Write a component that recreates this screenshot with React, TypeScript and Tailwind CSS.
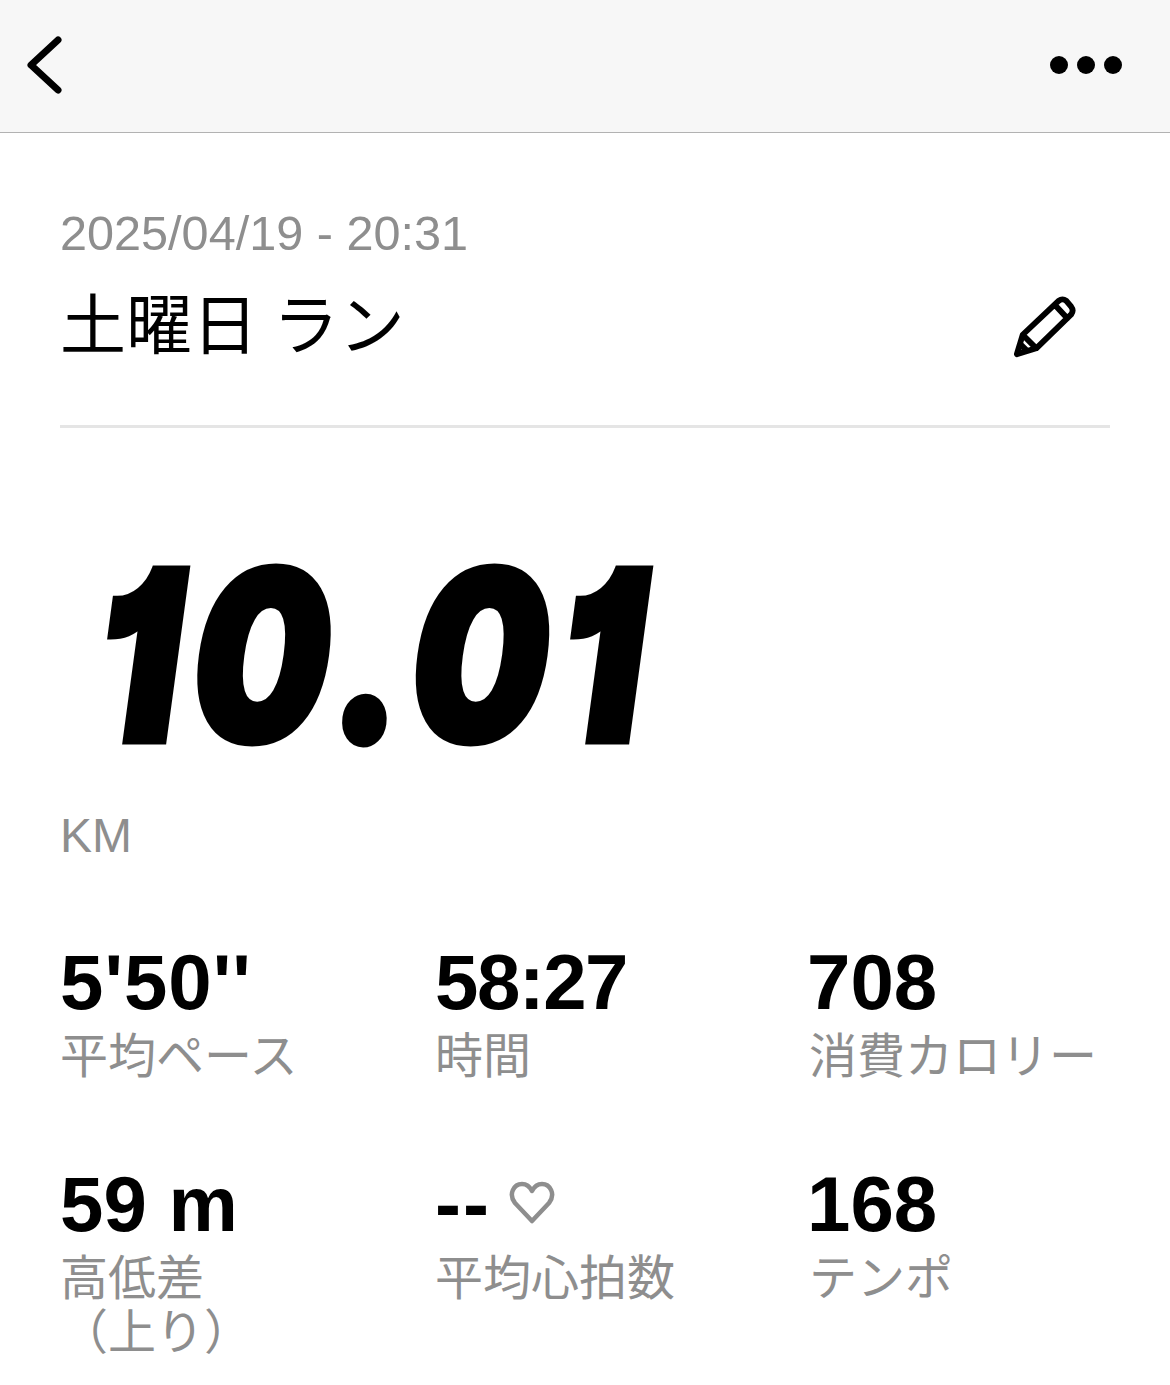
import React from 'react';

const sans = 'font-["Liberation_Sans","Noto_Sans_CJK_JP",sans-serif]';

const stats = [
  { value: "5'50''", label: '平均ペース', valueClass: 'tracking-[1px]' },
  { value: '58:27', label: '時間', valueClass: 'tracking-[-1.5px]' },
  { value: '708', label: '消費カロリー', valueClass: '-ml-[2px]' },
  { value: '59 m', label: '高低差\n（上り）', valueClass: '' },
  { value: '--', label: '平均心拍数', heart: true, valueClass: 'tracking-[2px]' },
  { value: '168', label: 'テンポ', valueClass: '-ml-[2px]' },
];

const App = () => {
  return (
    <div className={`${sans} w-[1170px] h-[1385px] bg-white overflow-hidden`}>
      {/* Top bar */}
      <header className="h-[133px] bg-[#f7f7f7] border-b border-[#b2b2b2] flex items-center justify-between pl-[26px] pr-[48px] pb-[2px]">
        <svg width="38" height="60" viewBox="0 0 38 60" fill="none">
          <path d="M32 4 L5 29 L32 54" stroke="#000" strokeWidth="7" strokeLinecap="round" strokeLinejoin="round" transform="translate(0 1)" />
        </svg>
        <div className="flex gap-[9px]">
          <span className="w-[18px] h-[18px] rounded-full bg-black" />
          <span className="w-[18px] h-[18px] rounded-full bg-black" />
          <span className="w-[18px] h-[18px] rounded-full bg-black" />
        </div>
      </header>

      <main className="px-[60px]">
        <p className="mt-[72px] text-[48.6px] leading-[56px] text-[#8e8e8e]">2025/04/19 - 20:31</p>
        <div className="mt-[23px] flex items-center justify-between h-[72px]">
          <h1 className="text-[66px] leading-[72px] text-black whitespace-pre font-['Noto_Sans_CJK_JP',sans-serif]">土曜日 ラン</h1>
          <svg className="mr-[33px] mt-[14px]" width="64" height="66" viewBox="0 0 66 66" fill="none">
            <path
              d="M4 61 L10 41 L47 6 Q51 3 55 6 L60 12 Q63 16 60 20 L24 55 Z M43 10 L56 24 M11 42 L23 54 M8 51 L14 57"
              stroke="#000"
              strokeWidth="6"
              strokeLinejoin="round"
              strokeLinecap="round"
            />
          </svg>
        </div>
        <div className="mt-[69px] h-[3px] bg-[#e5e5e5]" />

        {/* Distance */}
        <div className="mt-[111px] h-[230px] pl-[36px] overflow-visible">
          <div className="origin-top-left scale-x-[0.82] text-[236px] leading-[236px] italic font-black text-black tracking-[13px] font-['Inter',sans-serif] [font-feature-settings:'cv01'] [-webkit-text-stroke:7px_black] -mt-[2px] whitespace-nowrap">
            10.01
          </div>
        </div>
        <p className="mt-[41px] text-[48px] leading-[56px] text-[#8e8e8e]">KM</p>

        {/* Stats */}
        <div className="mt-[76px] grid grid-cols-[375px_374px_1fr] gap-y-[42px]">
          {stats.map((s) => (
            <div key={s.label} className="min-h-[180px]">
              <div className={`flex items-center h-[85px] text-[78px] leading-[85px] font-bold text-black ${s.valueClass}`}>
                {s.value}
                {s.heart && (
                  <svg className="ml-[18px] -mt-[4px]" width="46" height="44" viewBox="0 0 46 44" fill="none">
                    <path
                      d="M23 40 L6 22 C-1 13 5 3 13 3 C18 3 21 6 23 10 C25 6 28 3 33 3 C41 3 47 13 40 22 Z"
                      stroke="#8e8e8e"
                      strokeWidth="4.5"
                      strokeLinejoin="round"
                    />
                  </svg>
                )}
              </div>
              <p className="text-[48px] leading-[54px] text-[#8e8e8e] whitespace-pre-line font-['Noto_Sans_CJK_JP',sans-serif]">
                {s.label}
              </p>
            </div>
          ))}
        </div>
      </main>
    </div>
  );
};

export default App;
